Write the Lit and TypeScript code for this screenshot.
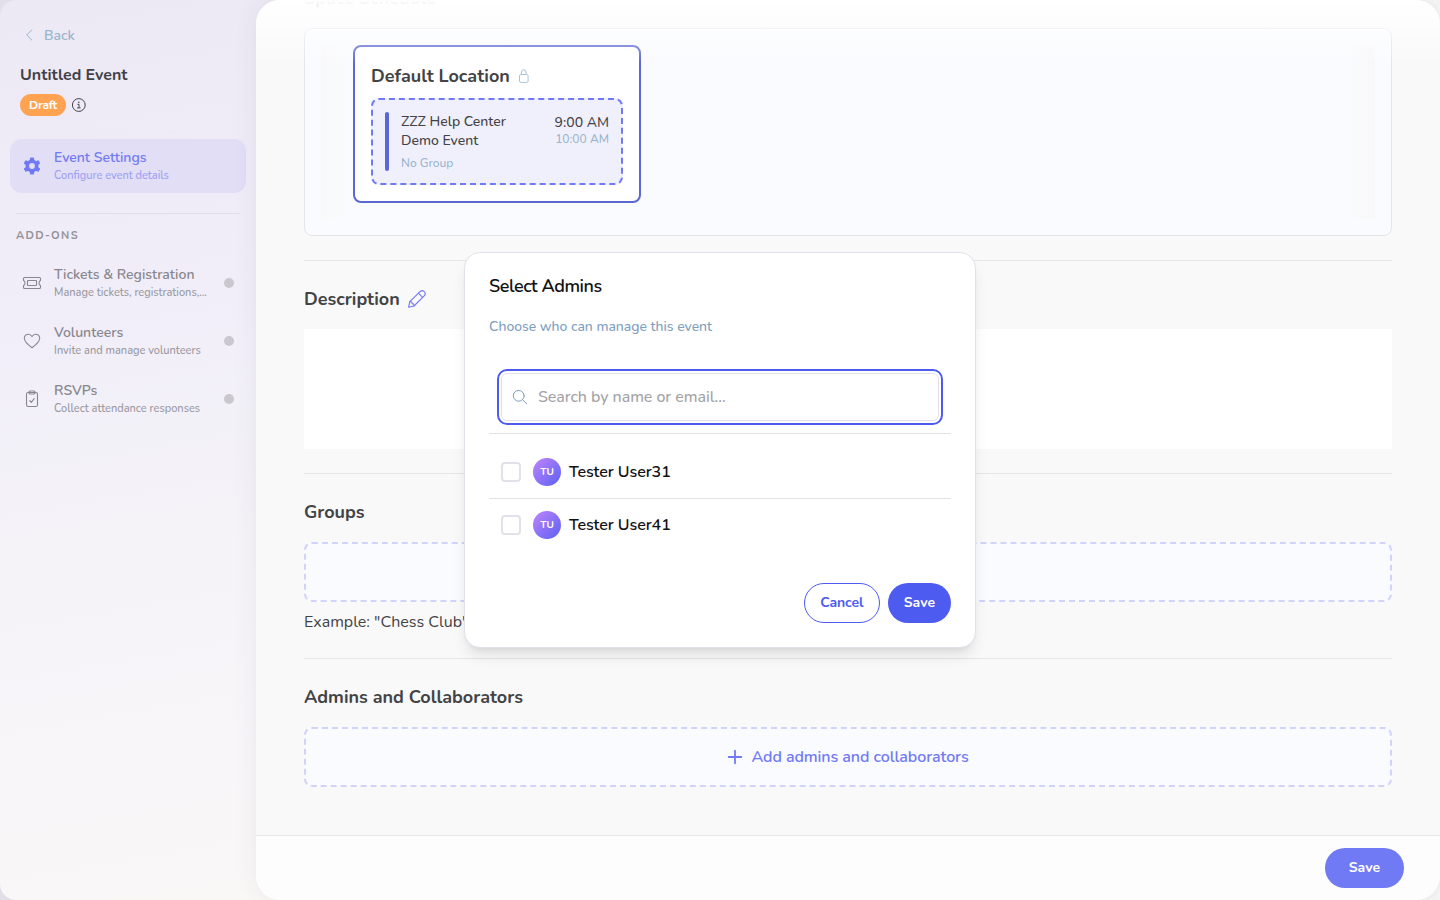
import { LitElement, html, css, svg } from "lit";
import { customElement, property } from "lit/decorators.js";

const lockIcon = html`<svg width="12" height="14" viewBox="0 0 12 14" fill="none" stroke="currentColor" stroke-width="1"><rect x="1.500" y="5.500" width="8.600" height="7.900" rx="1.400"></rect><path d="M3.500 5.500V3a2.300 2.300 0 0 1 4.600 0v2.500"></path></svg>`;
const pencilIcon = html`<svg width="18" height="18" viewBox="0 0 18 18" fill="none" stroke="currentColor" stroke-width="1.1" stroke-linejoin="round" stroke-linecap="round"><path d="M.6 17.200l1.200-5.500L12 1.600a2.900 2.900 0 0 1 4.200 4.200L6 16z"></path><path d="M10.400 3.200l4.200 4.200M1.800 11.700c1.800-.2 2.400.5 2.300 1.900 1.400-.1 2.100.7 1.900 2.400"></path></svg>`;
const plusIcon = html`<svg width="16" height="16" viewBox="0 0 16 16" fill="none" stroke="currentColor" stroke-width="1.800" stroke-linecap="round"><path d="M8 1.700v12.600M1.700 8h12.600"></path></svg>`;
const searchIcon = html`<svg width="16" height="16" viewBox="0 0 16 16" fill="none" stroke="currentColor" stroke-width="1" stroke-linecap="round"><circle cx="6.700" cy="6.800" r="5.400"></circle><path d="M10.600 10.700l4 4"></path></svg>`;
const backIcon = html`<svg width="16" height="16" viewBox="0 0 16 16" fill="none" stroke="currentColor" stroke-width="1" stroke-linecap="round" stroke-linejoin="round"><path d="M9.700 3L4.700 8l5 5"></path></svg>`;
const infoIcon = html`<svg width="14" height="14" viewBox="0 0 14 14" fill="none" stroke="currentColor" stroke-width="1"><circle cx="6.800" cy="7" r="6.400"></circle><path d="M5.400 6.300H7v3.400M5.100 9.900h3.500"></path><circle cx="6.800" cy="4.200" r=".8" fill="currentColor" stroke="none"></circle></svg>`;

const gearTeeth = [0, 60, 120, 180, 240, 300];
const icons: Record<string, unknown> = {
  gear: html`<svg width="20" height="20" viewBox="0 0 20 20" fill="none"><circle cx="10" cy="10" r="4.700" stroke="currentColor" stroke-width="3.600"></circle>${gearTeeth.map(
    (a) => svg`<rect x="7.900" y="1.500" width="4.200" height="4" rx="1" fill="currentColor" transform="rotate(${a} 10 10)"></rect>`
  )}</svg>`,
  ticket: html`<svg width="20" height="20" viewBox="0 0 20 20" fill="none" stroke="currentColor" stroke-width="1.100" stroke-linejoin="round"><path d="M2.500 4.500h15a1 1 0 0 1 1 1v2c-1 .4-1.500 1.300-1.500 2.500s.5 2.100 1.500 2.500v2a1 1 0 0 1-1 1h-15a1 1 0 0 1-1-1v-2c1-.4 1.500-1.300 1.500-2.500s-.5-2.100-1.500-2.500v-2a1 1 0 0 1 1-1z"></path><rect x="5.500" y="7.500" width="9" height="5" rx=".6"></rect></svg>`,
  heart: html`<svg width="20" height="20" viewBox="0 0 20 20" fill="none" stroke="currentColor" stroke-width="1.100" stroke-linejoin="round"><path d="M10 16.800C6.500 14.200 2.300 11 2.300 7.300a4 4 0 0 1 4-4.100c1.600 0 2.900.9 3.700 2.400.8-1.500 2.100-2.400 3.700-2.400a4 4 0 0 1 4 4.100c0 3.700-4.200 6.900-7.700 9.500z"></path></svg>`,
  clipboard: html`<svg width="20" height="20" viewBox="0 0 20 20" fill="none" stroke="currentColor" stroke-width="1.100" stroke-linecap="round" stroke-linejoin="round"><rect x="4.500" y="3.500" width="11" height="14" rx="1.600"></rect><path d="M7 3.500V3a1 1 0 0 1 1-1h4a1 1 0 0 1 1 1v.7a1.300 1.300 0 0 1-1.300 1.300H8.300A1.300 1.300 0 0 1 7 3.700zM7.800 11.600l1.500 1.700 2.900-3.600"></path></svg>`,
};

@customElement("nav-item")
class NavItem extends LitElement {
  @property() icon = "";
  @property() label = "";
  @property() hint = "";
  @property({ type: Boolean }) active = false;

  static styles = css`
    :host { display: block; }
    .item { display: flex; align-items: center; gap: 12px; height: 54px; padding: 0 12px; box-sizing: border-box; border-radius: 12px; color: #88878d; }
    .active { background: #e1def5; color: #707af4; }
    svg { display: block; flex: none; }
    .text { flex: 1; min-width: 0; padding-bottom: 2px; }
    .label { font-size: 14px; font-weight: 600; line-height: 20px; white-space: nowrap; }
    .hint { font-size: 11px; font-weight: 500; line-height: 15px; color: #99989e; white-space: nowrap; }
    .active .hint { color: #9a9ef4; }
    .dot { width: 10px; height: 10px; border-radius: 50%; background: #cac8ce; }
  `;

  render() {
    return html`<div class="item ${this.active ? "active" : ""}">
      ${icons[this.icon]}
      <div class="text">
        <div class="label">${this.label}</div>
        <div class="hint">${this.hint}</div>
      </div>
      ${this.active ? "" : html`<span class="dot"></span>`}
    </div>`;
  }
}

@customElement("side-bar")
class SideBar extends LitElement {
  static styles = css`
    :host { display: flex; flex-direction: column; width: 256px; flex: none; }
    svg { display: block; }
    .head { display: flex; flex-direction: column; height: 133px; padding: 24px 20px 0; box-sizing: border-box; border-bottom: 1px solid #e9edf2; }
    .back { display: flex; align-items: center; gap: 6px; height: 22px; margin-left: 2px; font-size: 14px; font-weight: 600; color: #99b5cc; }
    .name { margin-top: 17px; font-size: 16px; font-weight: 700; line-height: 24px; color: #424146; }
    .status { display: flex; align-items: center; gap: 6px; margin-top: 7px; color: #424146; }
    .badge { height: 22px; padding: 0 9px; border-radius: 11px; background: #ffa353; color: #fff; font-size: 12px; font-weight: 700; line-height: 22px; letter-spacing: -0.200px; }
    nav { display: flex; flex-direction: column; gap: 4px; padding: 6px 10px 0; }
    .rule { height: 1px; margin: 20px 16px 0; background: #e2dfe9; }
    .group { margin: 14px 16px 7px; font-size: 11px; font-weight: 700; line-height: 15px; letter-spacing: 1.350px; color: #939298; }
  `;

  render() {
    return html`
      <div class="head">
        <div class="back">${backIcon}<span>Back</span></div>
        <div class="name">Untitled Event</div>
        <div class="status"><span class="badge">Draft</span>${infoIcon}</div>
      </div>
      <nav><nav-item active icon="gear" label="Event Settings" hint="Configure event details"></nav-item></nav>
      <div class="rule"></div>
      <div class="group">ADD-ONS</div>
      <nav>
        <nav-item icon="ticket" label="Tickets &amp; Registration" hint="Manage tickets, registrations,..."></nav-item>
        <nav-item icon="heart" label="Volunteers" hint="Invite and manage volunteers"></nav-item>
        <nav-item icon="clipboard" label="RSVPs" hint="Collect attendance responses"></nav-item>
      </nav>
    `;
  }
}

@customElement("event-form")
class EventForm extends LitElement {
  static styles = css`
    :host { display: flex; flex-direction: column; position: relative; flex: 1; min-width: 0; overflow: hidden; border-radius: 24px; background: #f9f9f9; box-shadow: 0 0 24px rgba(60, 50, 70, 0.070); color: #434345; }
    svg { display: block; }
    .scroll { flex: 1; min-height: 0; overflow: hidden; padding: 0 48px; }
    .fade { position: absolute; top: 0; left: 0; right: 0; height: 64px; background: linear-gradient(#fff 0%, rgba(255, 255, 255, 0.800) 20%, rgba(255, 255, 255, 0) 100%); }
    section { padding: 24px 0; border-bottom: 1px solid #e6e6ea; }
    section:first-child { margin-top: -40px; }
    section:last-child { border: 0; }
    h2 { display: flex; align-items: center; gap: 8px; margin: 0 0 16px; font-size: 18px; font-weight: 700; line-height: 28px; }
    h2 svg { color: #707af4; }
    .board { display: flex; height: 208px; padding: 16px; box-sizing: border-box; border: 1px solid #e4e5ec; border-radius: 8px; background: #fafbfe; }
    .lanes { display: flex; flex: 1; justify-content: space-between; height: 174px; }
    .edge { width: 24px; background: linear-gradient(90deg, #f9f9fa, #fafbfd); }
    .edge.right { width: 30px; background: linear-gradient(270deg, #f8f8f9, #fafbfe); }
    .location { width: 288px; height: 158px; margin: 0 auto 0 8px; padding: 15px 16px 16px; box-sizing: border-box; border: 2px solid #5b67d3; border-radius: 8px; background: #fff; }
    .place { display: flex; align-items: center; gap: 8px; height: 28px; margin-bottom: 8px; font-size: 18px; font-weight: 700; }
    .place svg { color: #a9c4d8; }
    .slot { display: flex; height: 87px; padding: 12px; box-sizing: border-box; border: 2px dashed #707af4; border-radius: 8px; background: #f0f0fd; font-size: 14px; font-weight: 500; line-height: 19px; }
    .bar { width: 4px; margin-right: 12px; border-radius: 2px; background: #5b67d3; }
    .what { flex: 1; }
    .sub { font-size: 12px; line-height: 17px; color: #99b5cc; }
    .what .sub { margin-top: 5px; }
    .when { padding-top: 2px; text-align: right; line-height: 17px; }
    .editor { height: 120px; background: #fff; }
    .add { display: flex; align-items: center; justify-content: center; gap: 8px; height: 60px; box-sizing: border-box; border: 2px dashed #d1d4fa; border-radius: 8px; background: #fafbfe; color: #707af4; font-size: 16px; font-weight: 600; letter-spacing: -0.080px; }
    .example { height: 24px; margin-top: 8px; font-size: 16px; line-height: 24px; }
    footer { display: flex; align-items: center; justify-content: flex-end; height: 65px; padding-right: 36px; box-sizing: border-box; border-top: 1px solid #e9e9eb; background: #fdfdfd; }
    .save { height: 40px; padding: 0 24px; border-radius: 20px; background: #707af4; color: #fff; font-size: 14px; font-weight: 700; line-height: 40px; }
  `;

  render() {
    return html`
      <div class="scroll">
        <section>
          <h2>Space Schedule</h2>
          <div class="board">
            <div class="lanes">
              <div class="edge"></div>
              <div class="location">
                <div class="place">Default Location ${lockIcon}</div>
                <div class="slot">
                  <div class="bar"></div>
                  <div class="what">ZZZ Help Center<br />Demo Event<div class="sub">No Group</div></div>
                  <div class="when">9:00 AM<div class="sub">10:00 AM</div></div>
                </div>
              </div>
              <div class="edge right"></div>
            </div>
          </div>
        </section>
        <section>
          <h2>Description ${pencilIcon}</h2>
          <div class="editor"></div>
        </section>
        <section>
          <h2>Groups</h2>
          <div class="add"></div>
          <div class="example">Example: "Chess Club"</div>
        </section>
        <section>
          <h2>Admins and Collaborators</h2>
          <div class="add">${plusIcon}<span>Add admins and collaborators</span></div>
        </section>
      </div>
      <div class="fade"></div>
      <footer><div class="save">Save</div></footer>
    `;
  }
}

@customElement("admin-dialog")
class AdminDialog extends LitElement {
  static styles = css`
    :host { display: flex; flex-direction: column; width: 512px; height: 396px; padding: 19px 24px 24px; box-sizing: border-box; border: 1px solid #e2e1ea; border-radius: 16px; background: #fff; box-shadow: 0 10px 15px -3px rgba(0, 0, 0, 0.100), 0 4px 6px -4px rgba(0, 0, 0, 0.100); color: #111114; }
    svg { display: block; }
    .title { font-size: 18px; font-weight: 600; line-height: 28px; letter-spacing: -0.450px; }
    .lead { margin-top: 17px; font-size: 14px; font-weight: 500; line-height: 20px; letter-spacing: -0.035px; color: #7ea0be; }
    .search { display: flex; align-items: center; gap: 10px; height: 48px; margin: 36px 12px 0; padding: 0 10px; box-sizing: border-box; border: 1px solid #e2e1ea; border-radius: 6px; outline: 2px solid #4d5bf0; outline-offset: 2px; color: #7ea0be; font-size: 16px; }
    .hint { color: #a3a3a6; font-weight: 500; letter-spacing: -0.060px; }
    .list { margin-top: 12px; padding-top: 12px; border-top: 1px solid #e2e1ea; }
    .row { display: flex; align-items: center; height: 52px; padding: 0 12px; font-size: 16px; font-weight: 600; letter-spacing: -0.070px; }
    .row + .row { border-top: 1px solid #e2e1ea; }
    .check { width: 20px; height: 20px; box-sizing: border-box; border: 2px solid #e2e1ea; border-radius: 4px; }
    .avatar { width: 28px; height: 28px; margin: 0 8px 0 12px; border-radius: 50%; background: linear-gradient(135deg, #c084fc, #5b61f2); color: #fff; font-size: 10px; font-weight: 700; line-height: 28px; text-align: center; }
    .actions { display: flex; justify-content: flex-end; gap: 8px; margin-top: auto; font-size: 14px; font-weight: 700; }
    .btn { height: 40px; padding: 0 16px; box-sizing: border-box; border-radius: 20px; line-height: 40px; background: #4d5bf0; color: #fff; }
    .ghost { border: 1px solid #4d5bf0; background: #fff; color: #4d5bf0; line-height: 38px; padding: 0 15.300px; letter-spacing: -0.060px; }
  `;

  render() {
    return html`
      <div class="title">Select Admins</div>
      <div class="lead">Choose who can manage this event</div>
      <div class="search">${searchIcon}<span class="hint">Search by name or email...</span></div>
      <div class="list">
        ${["Tester User31", "Tester User41"].map(
          (name) => html`<div class="row"><span class="check"></span><span class="avatar">TU</span>${name}</div>`
        )}
      </div>
      <div class="actions"><div class="btn ghost">Cancel</div><div class="btn">Save</div></div>
    `;
  }
}

@customElement("app-root")
class AppRoot extends LitElement {
  static styles = css`
    :host { display: block; width: 1440px; height: 900px; overflow: hidden; position: relative; background: linear-gradient(90deg, #e2dfe8 0%, #f3f3f4 60%); font-family: Nunito, Lato, "Open Sans", sans-serif; }
    .shell { display: flex; height: 900px; overflow: hidden; border-radius: 16px; background: linear-gradient(170deg, #ece9f5 0%, #f1eef9 36%, #f3f1f8 48%, #f9f6f9 84%, #faf7f7 100%) 0 0 / 280px 100% no-repeat, #f4f3f6; }
    .overlay { position: absolute; inset: 0; display: grid; place-items: center; }
  `;

  render() {
    return html`
      <div class="shell"><side-bar></side-bar><event-form></event-form></div>
      <div class="overlay"><admin-dialog></admin-dialog></div>
    `;
  }
}
